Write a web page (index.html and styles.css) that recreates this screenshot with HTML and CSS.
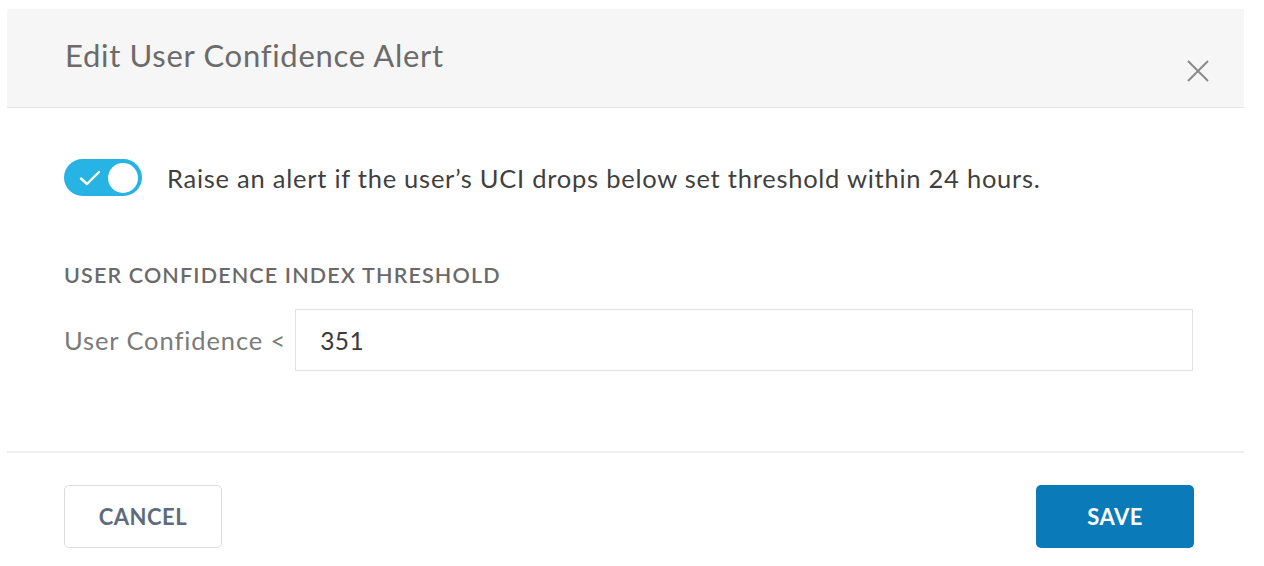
FILE: index.html
```html
<!DOCTYPE html>
<html>
<head>
<meta charset="utf-8">
<link rel="stylesheet" href="styles.css">
</head>
<body>
<div class="dialog">
  <div class="header">
    <div class="title">Edit User Confidence Alert</div>
    <button class="close" aria-label="Close">
      <svg width="24" height="24" viewBox="0 0 24 24"><path d="M2 2 L22 22 M22 2 L2 22" stroke="#8a8a8a" stroke-width="2" fill="none"/></svg>
    </button>
  </div>
  <div class="body">
    <div class="toggle-row">
      <div class="toggle">
        <svg class="check" width="22" height="16" viewBox="0 0 22 16"><path d="M2 8.5 L8 14 L20 2" stroke="#fff" stroke-width="2.4" fill="none" stroke-linecap="round" stroke-linejoin="round"/></svg>
        <div class="knob"></div>
      </div>
      <div class="toggle-text">Raise an alert if the user’s UCI drops below set threshold within 24 hours.</div>
    </div>
    <div class="section-label">USER CONFIDENCE INDEX THRESHOLD</div>
    <div class="field-row">
      <div class="field-label">User Confidence &lt;</div>
      <div class="input">351</div>
    </div>
  </div>
  <div class="footer">
    <button class="btn cancel">CANCEL</button>
    <button class="btn save">SAVE</button>
  </div>
</div>
</body>
</html>
```

FILE: styles.css
```css
html, body {
  margin: 0;
  padding: 0;
  background: #ffffff;
  font-family: Lato, "Open Sans", sans-serif;
}
.dialog {
  margin: 9px 0 0 7px;
  width: 1237px;
}
.header {
  height: 98px;
  background: #f6f6f6;
  border-bottom: 1px solid #e4e4e4;
  display: flex;
  justify-content: space-between;
  padding: 0 34px 0 58px;
}
.title {
  font-size: 31px;
  letter-spacing: 0.7px;
  color: #6b6b6b;
  margin-top: 28px;
  line-height: 36px;
}
.close {
  background: none;
  border: none;
  padding: 0;
  margin-top: 50px;
  width: 24px;
  height: 24px;
}
.body {
  padding: 51px 0 0 57px;
  height: 343px;
  box-sizing: border-box;
}
.toggle-row {
  display: flex;
  align-items: center;
  gap: 25px;
}
.toggle {
  width: 78px;
  height: 37px;
  border-radius: 19px;
  background: #27b4e5;
  position: relative;
  display: flex;
  align-items: center;
  justify-content: space-between;
  padding: 0 4px 0 15px;
  box-sizing: border-box;
}
.knob {
  width: 30px;
  height: 30px;
  border-radius: 50%;
  background: #fff;
}
.toggle-text {
  font-size: 25.5px;
  letter-spacing: 0.75px;
  color: #3f3f3f;
}
.section-label {
  margin-top: 66px;
  font-size: 21.5px;
  letter-spacing: 1.15px;
  font-weight: 600;
  color: #6a6a6a;
  line-height: 26px;
}
.field-row {
  margin-top: 21px;
  display: flex;
  align-items: center;
  gap: 9px;
}
.field-label {
  font-size: 25.5px;
  letter-spacing: 0.9px;
  color: #7a7a7a;
}
.input {
  width: 898px;
  height: 62px;
  box-sizing: border-box;
  border: 1px solid #e2e2e2;
  display: flex;
  align-items: center;
  padding-left: 24px;
  font-size: 24.5px;
  letter-spacing: 0.4px;
  color: #3a3a3a;
}
.footer {
  border-top: 2px solid #efefef;
  height: 114px;
  box-sizing: border-box;
  display: flex;
  justify-content: space-between;
  align-items: flex-start;
  padding: 32px 50px 0 57px;
}
.btn {
  width: 158px;
  height: 63px;
  border-radius: 5px;
  font-family: Lato, "Open Sans", sans-serif;
  font-size: 22px;
  letter-spacing: 0.5px;
  font-weight: 700;
  cursor: pointer;
}
.cancel {
  background: #fff;
  border: 1px solid #dcdcdc;
  color: #5d6b7c;
}
.save {
  background: #0a7ab8;
  border: none;
  color: #fff;
}
```
